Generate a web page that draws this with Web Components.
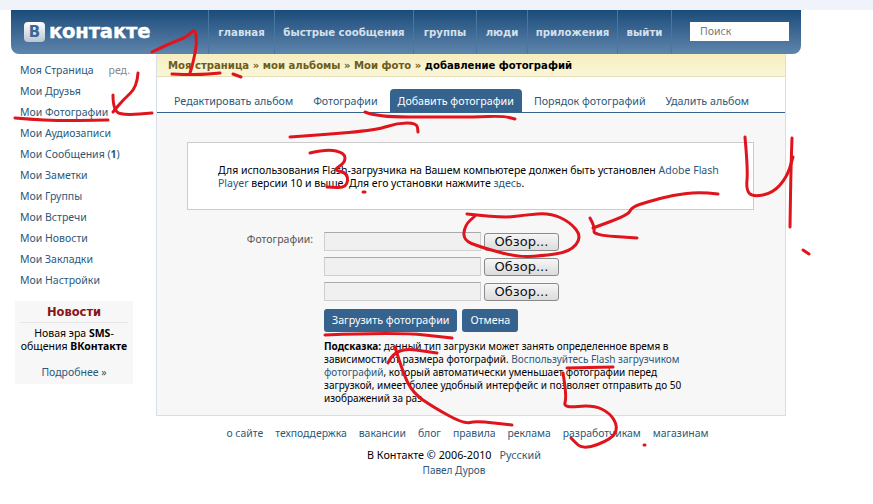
<!DOCTYPE html>
<html lang="ru">
<head>
<meta charset="utf-8">
<title>В Контакте</title>
<style>
  html, body { margin: 0; padding: 0; background: #fff; }
  body { position: relative; width: 873px; height: 504px; overflow: hidden; font: 10.5px "Noto Sans", "DejaVu Sans", sans-serif; color: #000; }
</style>
</head>
<body>
<vk-page>
  <vk-header slot="header"></vk-header>
  <vk-sidebar slot="side"></vk-sidebar>
  <vk-crumbs slot="main"></vk-crumbs>
  <vk-tabs slot="main"></vk-tabs>
  <vk-upload slot="main"></vk-upload>
  <vk-footer slot="footer"></vk-footer>
</vk-page>
<vk-scribbles></vk-scribbles>

<script>
const LINK = "#2b587a";

function define(name, html, init) {
  customElements.define(name, class extends HTMLElement {
    constructor() {
      super();
      this.attachShadow({ mode: "open" }).innerHTML = html;
      if (init) init(this.shadowRoot);
    }
  });
}

define("vk-page", `
<style>
  :host { display: block; }
  .strip { height: 10px; background: #f1f3fb; }
  .head { padding-left: 11px; }
  .cols { display: flex; }
  .side { width: 156px; flex: none; }
  .main { width: 628px; flex: none; border: solid #d6dee9; border-width: 0 1px 1px; background: #f7f7f7; height: 361px; }
</style>
<div class="strip"></div>
<div class="head"><slot name="header"></slot></div>
<div class="cols">
  <div class="side"><slot name="side"></slot></div>
  <div class="main"><slot name="main"></slot></div>
</div>
<slot name="footer"></slot>`);

define("vk-header", `
<style>
  :host { display: flex; width: 790px; height: 44px; box-sizing: border-box; color: #fff;
    background: linear-gradient(#1b4b7a, #5f85ac); border-radius: 0 0 8px 8px; }
  .logo { width: 197px; flex: none; display: flex; align-items: center; padding-left: 13px; box-sizing: border-box; gap: 4px; }
  .b { width: 21px; height: 20px; border-radius: 4px; background: linear-gradient(#fff, #b9c6d4); color: #3a6794;
    font: bold 15px/20px "DejaVu Sans", sans-serif; text-align: center; }
  .word { font: bold 19.6px/24px "DejaVu Sans", sans-serif; letter-spacing: -.2px; -webkit-text-stroke: .4px #fff; }
  nav { display: flex; }
  a { display: flex; align-items: center; justify-content: center; box-sizing: border-box; border-left: 1px solid #4a76a2;
    font: bold 10.2px "DejaVu Sans", sans-serif; color: #d5e0ec; }
  .search { margin: 12px 0 0 18px; width: 99px; height: 19px; background: #fff; color: #777; padding-left: 10px;
    box-sizing: border-box; font: 10.5px/19px "Noto Sans", sans-serif; }
</style>
<div class="logo"><span class="b">В</span><span class="word">контакте</span></div>
<nav>
  <a style="width:66px">главная</a>
  <a style="width:139px">быстрые сообщения</a>
  <a style="width:63px">группы</a>
  <a style="width:51px">люди</a>
  <a style="width:90px">приложения</a>
  <a style="width:54px">выйти</a>
  <a style="width:0"></a>
</nav>
<div class="search">Поиск</div>`);

define("vk-sidebar", `
<style>
  :host { display: block; padding: 6px 0 0 20px; color: ${LINK}; }
  .item { height: 21px; line-height: 21px; white-space: nowrap; display: flex; }
  .edit { margin-left: 15px; color: #888; }
  b { color: ${LINK}; }
  .news { margin: 10px 0 0 -5px; width: 118px; height: 83px; background: #f7f7f7; text-align: center; color: #000; line-height: 13px; }
  h4 { margin: 0 5px; padding: 4px 0 3px; font: bold 11.5px/14px "DejaVu Sans", sans-serif; color: #8b1418; border-bottom: 1px solid #e4e4e4; }
  p { margin: 4px 0 0; white-space: nowrap; }
  p b { color: #000; }
  .more { color: ${LINK}; margin-top: 13px; }
</style>
<div class="item">Моя Страница<span class="edit">ред.</span></div>
<div class="item">Мои Друзья</div>
<div class="item">Мои Фотографии</div>
<div class="item">Мои Аудиозаписи</div>
<div class="item">Мои Сообщения (<b>1</b>)</div>
<div class="item">Мои Заметки</div>
<div class="item">Мои Группы</div>
<div class="item">Мои Встречи</div>
<div class="item">Мои Новости</div>
<div class="item">Мои Закладки</div>
<div class="item">Мои Настройки</div>
<div class="news">
  <h4>Новости</h4>
  <p>Новая эра <b>SMS</b>-<br>общения <b>ВКонтакте</b></p>
  <p class="more">Подробнее »</p>
</div>`);

define("vk-crumbs", `
<style>
  :host { display: block; height: 22px; padding-left: 11px; white-space: nowrap;
    background: linear-gradient(#f6eebf, #fbf6d8); border-bottom: 1px solid #e4dfb4;
    font: bold 10.1px/23px "DejaVu Sans", sans-serif; color: #6d5c1a; }
  b { color: #000; }
</style>
Моя страница » мои альбомы » Мои фото » <b>добавление фотографий</b>`);

define("vk-tabs", `
<style>
  :host { display: flex; height: 36px; padding: 12px 0 0 9px; box-sizing: border-box; background: #fff;
    border-bottom: 1px solid #36638e; color: ${LINK}; white-space: nowrap; font-size: 10.7px; }
  span { height: 23px; line-height: 24px; padding: 0 8px; border-radius: 4px 4px 0 0; margin-right: 4px; }
  .on { background: #36638e; color: #fff; }
</style>
<span>Редактировать альбом</span>
<span>Фотографии</span>
<span class="on">Добавить фотографии</span>
<span>Порядок фотографий</span>
<span>Удалить альбом</span>`);

define("vk-file-row", `
<style>
  :host { display: flex; align-items: flex-start; height: 25px; }
  .in { width: 157px; height: 19px; box-sizing: border-box; background: #f0f0f0; border: 1px solid #cfcfcf; border-top-color: #aaa; }
  .btn { margin: 1px 0 0 3px; width: 75px; height: 18px; box-sizing: border-box; border: 1px solid #8a8a8a; border-radius: 3px;
    background: linear-gradient(#f6f6f6, #dcdcdc); font: 13px/16px "DejaVu Sans", sans-serif; text-align: center; color: #111; }
</style>
<div class="in"></div><div class="btn">Обзор...</div>`);

define("vk-button", `
<style>
  :host { display: block; height: 23px; padding: 0 8px; background: #36638e; color: #fff; border-radius: 3px;
    line-height: 23px; white-space: nowrap; font-size: 10.7px; }
</style>
<slot></slot>`);

define("vk-upload", `
<style>
  :host { display: block; padding: 29px 0 0 30px; }
  .note { width: 567px; height: 68px; box-sizing: border-box; padding: 21px 30px 0; background: #fff; border: 1px solid #ccc;
    line-height: 13px; white-space: nowrap; }
  a { color: ${LINK}; }
  .form { display: grid; grid-template-columns: 126px auto; margin-top: 22px; margin-left: 11px; }
  label { text-align: right; padding-right: 11px; color: #555; line-height: 14px; }
  .btns { display: flex; gap: 5px; margin-top: 2px; }
  .hint { margin-top: 8px; line-height: 13px; white-space: nowrap; font-size: 10px; }
</style>
<div class="note">Для использования Flash-загрузчика на Вашем компьютере должен быть установлен <a>Adobe Flash<br>Player</a> версии 10 и выше. Для его установки нажмите <a>здесь</a>.</div>
<div class="form">
  <label>Фотографии:</label>
  <div>
    <vk-file-row></vk-file-row>
    <vk-file-row></vk-file-row>
    <vk-file-row></vk-file-row>
    <div class="btns"><vk-button>Загрузить фотографии</vk-button><vk-button>Отмена</vk-button></div>
    <div class="hint"><b>Подсказка:</b> данный тип загрузки может занять определенное время в<br>зависимости от размера фотографий. <a>Воспользуйтесь Flash загрузчиком<br>фотографий</a>, который автоматически уменьшает фотографии перед<br>загрузкой, имеет более удобный интерфейс и позволяет отправить до 50<br>изображений за раз.</div>
  </div>
</div>`);

define("vk-footer", `
<style>
  :host { display: block; box-sizing: border-box; width: 873px; padding: 10px 0 0 35px; text-align: center; color: ${LINK}; }
  .links { display: flex; justify-content: center; gap: 12px; line-height: 14px; margin-left: 27px; font-size: 10.4px; }
  .copy { margin-top: 8px; line-height: 14px; color: #000; display: flex; justify-content: center; gap: 8px; font-size: 10.8px; }
  .copy a { color: ${LINK}; }
  .author { margin-top: 1px; font-size: 10px; line-height: 14px; }
</style>
<div class="links"><span>о сайте</span><span>техподдержка</span><span>вакансии</span><span>блог</span><span>правила</span><span>реклама</span><span>разработчикам</span><span>магазинам</span></div>
<div class="copy"><span>В Контакте © 2006-2010</span><a>Русский</a></div>
<div class="author">Павел Дуров</div>`);

// red marker strokes, page coordinates; corners get rounded through the midpoints
const STROKES = [
  [[152,52],[173,42],[187,37],[195,28],[197,43],[193,63],[190,73]],
  [[172,74],[196,75],[220,73]],
  [[233,74],[241,77]],
  [[138,73],[137,87],[123,100],[113,112]],
  [[113,95],[113,112],[127,115],[152,113]],
  [[15,118],[50,121],[108,120]],
  [[365,112],[377,117],[440,117],[473,117],[503,116],[515,119]],
  [[290,137],[320,135],[377,130],[397,123],[417,123],[418,132]],
  [[310,153],[327,149],[345,153],[345,163],[333,170],[348,173],[347,188],[327,187]],
  [[363,192],[365,192]],
  [[745,137],[748,170],[746,190],[753,197],[773,193],[787,177],[793,157]],
  [[792,138],[791,165],[790,227]],
  [[803,250],[809,254]],
  [[718,194],[700,192],[673,195],[647,202],[632,207],[628,215],[593,228]],
  [[590,218],[595,227],[593,235],[637,238]],
  [[467,214],[503,218],[525,215],[550,213],[570,222],[582,237],[570,252],[540,256],[517,257],[480,247],[463,240],[465,225],[475,216]],
  [[325,335],[397,332],[452,338]],
  [[388,363],[395,347],[437,353]],
  [[395,347],[403,373],[413,393],[433,407],[464,424],[476,421],[512,425]],
  [[567,368],[613,367]],
  [[563,373],[567,397],[563,408],[593,405],[610,413],[618,427],[612,439],[583,450],[571,438]],
  [[644,445],[645,445]],
];

function strokePath(pts) {
  let d = `M${pts[0]}`;
  for (let i = 1; i < pts.length - 1; i++) {
    const mx = (pts[i][0] + pts[i + 1][0]) / 2, my = (pts[i][1] + pts[i + 1][1]) / 2;
    d += `Q${pts[i]} ${mx},${my}`;
  }
  return d + `L${pts[pts.length - 1]}`;
}

define("vk-scribbles", `
<style>
  :host { position: absolute; left: 0; top: 0; width: 873px; height: 504px; pointer-events: none; }
  svg { display: block; }
  path { fill: none; stroke: #e0141c; stroke-width: 3; stroke-linecap: round; stroke-linejoin: round; }
</style>
<svg width="873" height="504" viewBox="0 0 873 504">${STROKES.map(s => `<path d="${strokePath(s)}"/>`).join("")}</svg>`);
</script>
</body>
</html>
